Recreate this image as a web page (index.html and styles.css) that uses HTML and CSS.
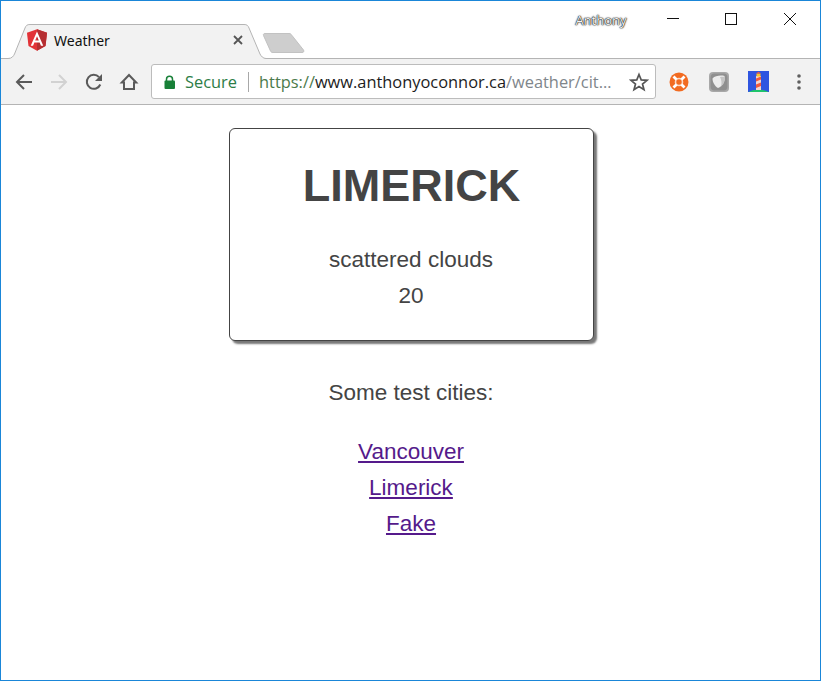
FILE: index.html
```html
<!DOCTYPE html>
<html lang="en">
<head>
<meta charset="utf-8">
<title>Weather</title>
<link rel="stylesheet" href="styles.css">
</head>
<body>
<div class="window">
  <header class="titlebar">
    <div class="tab">
      <svg class="tab-shape" width="262" height="37" viewBox="0 0 262 37"><path d="M0 35.500C4 35.500 5.500 33 6.500 31L17 5C18 2.500 19 1.500 22 1.500H236C239 1.500 240 2.500 241 5L252 31C253 33 255 35.500 258 35.500V37H0Z" fill="#f2f2f2"/><path d="M0 35.500C4 35.500 5.500 33 6.500 31L17 5C18 2.500 19 1.500 22 1.500H236C239 1.500 240 2.500 241 5L252 31C253 33 255 35.500 258 35.500" fill="none" stroke="#b4b4b4"/></svg>
      <svg class="favicon" width="22" height="22" viewBox="30 28 190 204"><polygon fill="#E23237" points="125,30 31.900,63.200 46.100,186.300 125,230 203.900,186.300 218.100,63.200"/><polygon fill="#B52E31" points="125,30 125,230 203.900,186.300 218.100,63.200"/><path fill="#fff" d="M125 52.100L66.800 182.600H88.500L100.200 153.400H149.600L161.300 182.600H183L125 52.100ZM142 135.400H108L125 94.500Z"/></svg>
      <span class="tab-title">Weather</span>
      <svg class="tab-close" width="10" height="10" viewBox="0 0 10 10"><path d="M1 1L9 9M9 1L1 9" stroke="#555" stroke-width="1.800"/></svg>
    </div>
    <svg class="newtab" width="44" height="22" viewBox="0 0 44 22"><path d="M3 1.500H27C28.500 1.500 29 2 30 3.500L41.500 18C42.500 19.500 41.500 20.500 40 20.500H11C9.500 20.500 9 20 8.500 19L1.500 3.500C1 2.500 1.500 1.500 3 1.500Z" fill="#cecece" stroke="#c2c2c2"/></svg>
    <div class="spacer"></div>
    <span class="profile">Anthony</span>
    <div class="winctl"><svg width="14" height="14" viewBox="0 0 14 14"><path d="M1 6.500H13" stroke="#111"/></svg></div>
    <div class="winctl"><svg width="14" height="14" viewBox="0 0 14 14"><rect x="1.500" y="1.500" width="11" height="11" fill="none" stroke="#111"/></svg></div>
    <div class="winctl"><svg width="14" height="14" viewBox="0 0 14 14"><path d="M1 1L13 13M13 1L1 13" stroke="#111"/></svg></div>
  </header>
  <nav class="toolbar">
    <div class="navbtn"><svg width="20" height="20" viewBox="0 0 20 20"><path d="M18 10H3M10 3L3 10L10 17" fill="none" stroke="#5a5a5a" stroke-width="2"/></svg></div>
    <div class="navbtn"><svg width="20" height="20" viewBox="0 0 20 20"><path d="M2 10H17M10 3L17 10L10 17" fill="none" stroke="#d2d2d2" stroke-width="2"/></svg></div>
    <div class="navbtn"><svg width="20" height="20" viewBox="0 0 20 20"><path d="M16.300 12.500A7 7 0 1 1 15 5.100" fill="none" stroke="#5a5a5a" stroke-width="2"/><path d="M18 2V9H11Z" fill="#5a5a5a"/></svg></div>
    <div class="navbtn"><svg width="20" height="20" viewBox="0 0 20 20"><path d="M10 3L2.800 10.500H5V17H15V10.500H17.200Z" fill="none" stroke="#5a5a5a" stroke-width="2" stroke-linejoin="miter"/></svg></div>
    <div class="omnibox">
      <svg class="lock" width="12" height="14" viewBox="0 0 12 14"><path d="M2.500 6V4.200C2.500 2.400 3.800 1.200 5.500 1.200S8.500 2.400 8.500 4.200V6" fill="none" stroke="#188038" stroke-width="1.500"/><rect x="0.500" y="5.500" width="10.500" height="8.500" rx="1" fill="#188038"/></svg>
      <span class="secure">Secure</span>
      <span class="divider"></span>
      <span class="url"><span class="scheme">https://</span><span class="host">www.anthonyoconnor.ca</span><span class="path">/weather/cit…</span></span>
      <svg class="star" width="20" height="20" viewBox="0 0 20 20"><path d="M10 2.500L12.200 7.900L18 8.300L13.500 12L15 17.700L10 14.600L5 17.700L6.500 12L2 8.300L7.800 7.900Z" fill="none" stroke="#555" stroke-width="1.700"/></svg>
    </div>
    <div class="extensions">
      <div class="extbtn"><svg width="20" height="20" viewBox="0 0 20 20"><circle cx="10" cy="10" r="9.500" fill="#f26b21"/><circle cx="10" cy="10" r="3.500" fill="none" stroke="#fbd9c5" stroke-width="1.600"/><path d="M4.500 4.500L7.500 7.500M15.500 4.500L12.500 7.500M4.500 15.500L7.500 12.500M15.500 15.500L12.500 12.500" stroke="#fff" stroke-width="2.800"/></svg></div>
      <div class="extbtn"><svg width="20" height="20" viewBox="0 0 20 20"><rect width="20" height="20" rx="4" fill="#a8a8a8"/><rect x="1.500" y="1.500" width="17" height="17" rx="4" fill="#8f8f8f"/><path d="M3.500 6.500C6 3.500 12 3 15.500 4C16.500 9 13.500 14.500 9 16C5.500 14 3.500 10 3.500 6.500Z" fill="#ececec"/><path d="M11 5C13 4.500 15 4.500 16 5C16.200 10 14 13 12 14.500C13 11 12.500 8 11 5Z" fill="#c4c4c4"/></svg></div>
      <div class="extbtn"><svg width="22" height="21" viewBox="0 0 22 21"><rect width="21" height="21" fill="#2f55e0"/><path d="M1 21C3 18 18 18 20 21Z" fill="#1fc46b"/><rect x="8" y="5" width="5" height="14" fill="#f2d6cf"/><path d="M8 7.500L13 5.500V8.500L8 10.500ZM8 13.500L13 11.500V15L8 17Z" fill="#f0593e"/><rect x="8.500" y="2.500" width="4" height="3" fill="#f9c32b"/><path d="M8 2.500L10.500 0.800L13 2.500Z" fill="#f0593e"/></svg></div>
      <div class="extbtn"><svg width="4" height="16" viewBox="0 0 4 16"><circle cx="2" cy="2" r="1.800" fill="#5f5f5f"/><circle cx="2" cy="8" r="1.800" fill="#5f5f5f"/><circle cx="2" cy="14" r="1.800" fill="#5f5f5f"/></svg></div>
    </div>
  </nav>
  <main class="page">
    <section class="card">
      <h1 class="city">LIMERICK</h1>
      <p class="line">scattered clouds</p>
      <p class="line">20</p>
    </section>
    <p class="intro">Some test cities:</p>
    <ul class="cities">
      <li><a class="city-link" href="#vancouver">Vancouver</a></li>
      <li><a class="city-link" href="#limerick">Limerick</a></li>
      <li><a class="city-link" href="#fake">Fake</a></li>
    </ul>
  </main>
</div>
</body>
</html>
```
FILE: styles.css
```css
html, body {
  margin: 0;
  padding: 0;
  background: #fff;
}

.window {
  box-sizing: border-box;
  width: 821px;
  height: 681px;
  border: 1px solid #1a86d8;
  display: flex;
  flex-direction: column;
  overflow: hidden;
  font-family: "Open Sans", "Liberation Sans", sans-serif;
}

.titlebar {
  height: 57px;
  flex: none;
  display: flex;
  align-items: flex-start;
  padding-right: 1px;
  border-bottom: 1px solid #b4b4b4;
  background: #fff;
  position: relative;
}

.tab {
  position: absolute;
  left: 7px;
  top: 22px;
  width: 262px;
  height: 37px;
  display: flex;
  align-items: center;
  padding: 0 0 0 18px;
  box-sizing: border-box;
}

.tab-shape {
  position: absolute;
  left: 0;
  top: 0;
}

.favicon {
  position: relative;
  margin-top: -3px;
  flex: none;
}

.tab-title {
  position: relative;
  margin: -3px 0 0 6px;
  font-size: 14px;
  color: #111;
  flex: 1;
  font-family: "Noto Sans", sans-serif;
}

.tab-close {
  position: relative;
  margin: -3px 27px 0 0;
}

.newtab {
  position: absolute;
  left: 261px;
  top: 31px;
}

.spacer {
  flex: 1;
}

.profile {
  font-size: 13px;
  line-height: 18px;
  margin: 10px 17px 0 0;
  color: #f4f4f4;
  text-shadow: 0 0 1px #000, 0 0 2px #222, 0 0 1px #222;
}

.winctl {
  width: 58.500px;
  height: 38px;
  display: flex;
  align-items: center;
  justify-content: center;
  margin-top: -1px;
}

.toolbar {
  height: 45px;
  flex: none;
  display: flex;
  align-items: center;
  padding-left: 5px;
  background: #f2f2f2;
  border-bottom: 1px solid #b4b4b4;
}

.navbtn {
  width: 35px;
  height: 34px;
  display: flex;
  align-items: center;
  justify-content: center;
}

.omnibox {
  box-sizing: border-box;
  width: 505px;
  height: 35px;
  margin-left: 5px;
  display: flex;
  align-items: center;
  padding-left: 12px;
  background: #fff;
  border: 1px solid #bcbcbc;
  border-radius: 3px;
  font-family: "Open Sans", sans-serif;
  font-size: 16.400px;
  white-space: nowrap;
}

.lock {
  flex: none;
  margin-right: 9px;
}

.secure {
  color: #2d7d46;
}

.divider {
  width: 1px;
  height: 20px;
  background: #a8a8a8;
  margin: 0 10px 0 11px;
}

.url {
  flex: 1;
}

.scheme {
  color: #4b7a4b;
}

.host {
  color: #1c1c1c;
}

.path {
  color: #80868b;
}

.star {
  flex: none;
  margin-right: 6px;
}

.extensions {
  display: flex;
  margin-left: 3px;
}

.extbtn {
  width: 40px;
  height: 34px;
  display: flex;
  align-items: center;
  justify-content: center;
}

.page {
  flex: 1;
  display: flex;
  flex-direction: column;
  align-items: center;
  padding-left: 1px;
  font-family: "Liberation Sans", Arial, sans-serif;
  font-size: 22.500px;
  line-height: 36px;
  color: #444;
  text-align: center;
}

.card {
  box-sizing: border-box;
  width: 365px;
  height: 213px;
  margin: 23px 0 0 1px;
  padding-top: 29px;
  background: #fff;
  border: 1px solid #444;
  border-radius: 6px;
  box-shadow: 3px 3px 2px #777;
}

.city {
  margin: 0 0 28px;
  font-size: 45px;
  line-height: 56px;
  font-weight: 700;
}

.line {
  margin: 0 1px 0 0;
}

.intro {
  margin: 34px 0 23px;
}

.cities {
  list-style: none;
  margin: 0;
  padding: 0;
}

.city-link {
  color: #551a8b;
}
```
